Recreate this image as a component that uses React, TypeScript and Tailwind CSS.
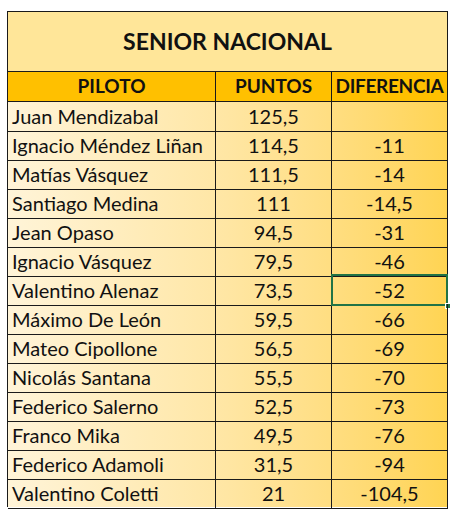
const rows: [string, string, string][] = [
  ['Juan Mendizabal', '125,5', ''],
  ['Ignacio Méndez Liñan', '114,5', '-11'],
  ['Matías Vásquez', '111,5', '-14'],
  ['Santiago Medina', '111', '-14,5'],
  ['Jean Opaso', '94,5', '-31'],
  ['Ignacio Vásquez', '79,5', '-46'],
  ['Valentino Alenaz', '73,5', '-52'],
  ['Máximo De León', '59,5', '-66'],
  ['Mateo Cipollone', '56,5', '-69'],
  ['Nicolás Santana', '55,5', '-70'],
  ['Federico Salerno', '52,5', '-73'],
  ['Franco Mika', '49,5', '-76'],
  ['Federico Adamoli', '31,5', '-94'],
  ['Valentino Coletti', '21', '-104,5'],
]

export default function App() {
  return (
    <div className="h-[512px] w-[458px] bg-white pl-[7px] pt-[11px] font-['Lato','Open_Sans',sans-serif] text-[20px] text-[#111]">
      <div className="w-[441px] border-l border-t border-[#1a1a1a]">
        <div className="flex h-[60px] items-center justify-center border-b border-r border-[#1a1a1a] bg-[#FFE699] text-[23px] font-bold">
          SENIOR NACIONAL
        </div>
        <div className="grid h-[29px] grid-cols-[208px_116px_116px] bg-[#FFC000] text-[19px] font-bold">
          <div className="flex items-center justify-center border-b border-r border-[#1a1a1a]">PILOTO</div>
          <div className="flex items-center justify-center border-b border-r border-[#1a1a1a]">PUNTOS</div>
          <div className="flex items-center justify-center border-b border-r border-[#1a1a1a] tracking-[-0.3px]">DIFERENCIA</div>
        </div>
        <div className="bg-gradient-to-r from-[#FFF4D8] via-[#FFE6A3] to-[#FFD452]">
          {rows.map(([name, pts, diff], i) => (
            <div key={name} className="grid h-[29px] grid-cols-[208px_116px_116px]">
              <div className="flex items-center border-b border-r border-[#1a1a1a] pl-[4px]">{name}</div>
              <div className="flex items-center justify-center border-b border-r border-[#1a1a1a]">{pts}</div>
              <div className="relative flex items-center justify-center border-b border-r border-[#1a1a1a]">
                {diff}
                {i === 6 && (
                  <>
                    <div className="absolute inset-[-1px] border-2 border-[#217346]" />
                    <div className="absolute bottom-[-4px] right-[-4px] h-[6px] w-[6px] border border-white bg-[#217346]" />
                  </>
                )}
              </div>
            </div>
          ))}
        </div>
      </div>
    </div>
  )
}
